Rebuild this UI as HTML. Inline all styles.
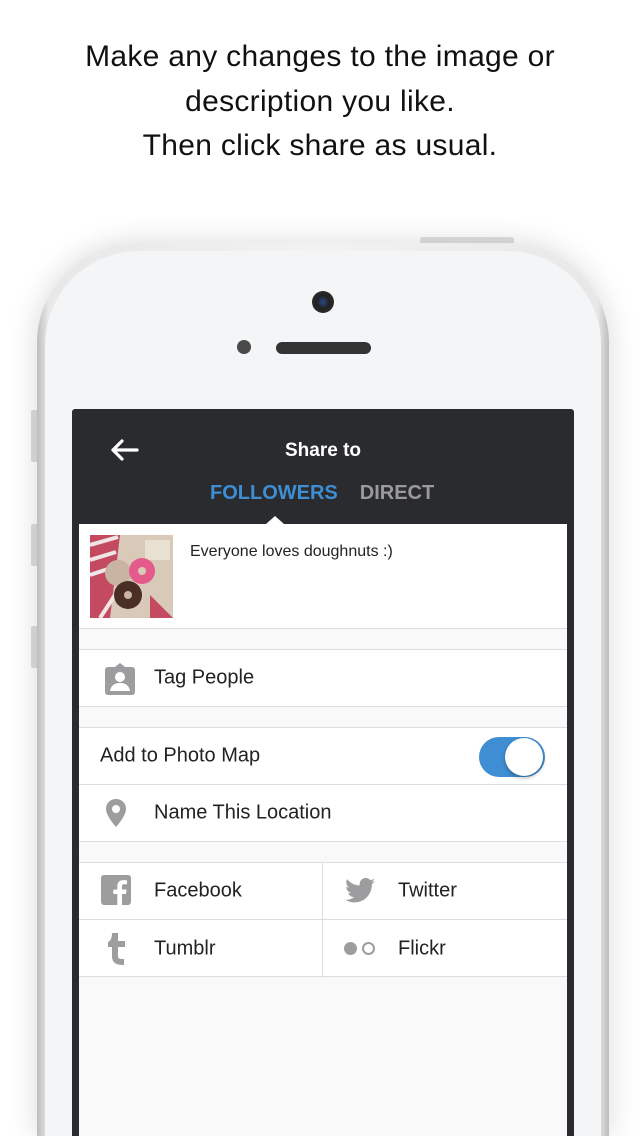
<!DOCTYPE html>
<html><head><meta charset="utf-8"><style>
*{margin:0;padding:0;box-sizing:border-box}
html,body{width:640px;height:1136px;overflow:hidden}
body{background:#fff;position:relative;font-family:"Liberation Sans",sans-serif}
.cap{position:absolute;top:35px;left:0;width:640px;text-align:center;font-size:30px;line-height:44.5px;color:#111;letter-spacing:0.3px}
.phone{position:absolute;left:37px;top:243px;width:572px;height:893px;border-radius:100px 100px 0 0;background:linear-gradient(90deg,#bdbdbd,#e8e8e8 2%,#f2f2f2 50%,#e8e8e8 98%,#bdbdbd);box-shadow:0 0 30px rgba(0,0,0,.15)}
.phone .inner{position:absolute;left:8px;top:8px;right:8px;bottom:0;border-radius:94px 94px 0 0;background:#f4f5f7}
.btn{position:absolute;left:420px;top:237px;width:94px;height:8px;background:#e0e0e0;border-radius:3px 3px 0 0}
.side{position:absolute;left:31px;width:7px;background:#ddd;border-radius:2px}
.cam{position:absolute;left:312px;top:291px;width:22px;height:22px;border-radius:50%;background:radial-gradient(circle at 50% 50%,#2a4a8a 0,#222 40%,#333 100%)}
.dot{position:absolute;left:237px;top:340px;width:14px;height:14px;border-radius:50%;background:#4a4a4a}
.spk{position:absolute;left:276px;top:342px;width:95px;height:12px;border-radius:6px;background:#333}
.screen{position:absolute;left:72px;top:409px;width:502px;height:727px;background:#2a2b2f;border-radius:3px 3px 0 0}
.hdr{position:absolute;left:79px;top:416px;width:488px;height:108px;background:#2a2b2f}
.title{position:absolute;left:0;width:488px;top:24px;text-align:center;color:#fff;font-size:19px;font-weight:bold}
.tabs{position:absolute;left:131px;top:66px;font-size:20px;font-weight:bold}
.content{position:absolute;left:79px;top:524px;width:488px;height:612px;background:#f9f9f9}
.row{position:absolute;left:0;width:488px;background:#fff;border-top:1px solid #ddd;border-bottom:1px solid #ddd;font-size:20px;color:#222}
.row span{position:absolute;top:50%;transform:translateY(-50%)}
.arrow{position:absolute;left:187px;top:-8px;width:0;height:0;border-left:9px solid transparent;border-right:9px solid transparent;border-bottom:8px solid #fff}
</style></head><body>
<div class="cap">Make any changes to the image or<br>description you like.<br>Then click share as usual.</div>
<div class="btn"></div>
<div class="side" style="top:410px;height:52px"></div>
<div class="side" style="top:524px;height:42px"></div>
<div class="side" style="top:626px;height:42px"></div>
<div class="phone"><div class="inner"></div></div>
<div class="cam"></div><div class="dot"></div><div class="spk"></div>
<div class="screen"></div>
<div class="hdr">
<svg style="position:absolute;left:30px;top:22px" width="30" height="24" viewBox="0 0 30 24"><path d="M28 12H4M13 3L4 12l9 9" stroke="#fff" stroke-width="3.2" fill="none" stroke-linecap="round" stroke-linejoin="round"/></svg>
<div class="title">Share to</div>
<div class="tabs"><span style="color:#3f8ed3">FOLLOWERS</span><span style="color:#9a9a9c;margin-left:22px">DIRECT</span></div>
</div>
<div class="content">
<div class="arrow"></div>
<div class="row" style="top:0;height:105px;border-top:none">
<svg style="position:absolute;left:11px;top:11px" width="83" height="83" viewBox="0 0 83 83"><rect width="83" height="83" fill="#d8c9b8"/><path d="M0 0h30L20 83H0z" fill="#c44a62"/><path d="M0 10l28-8M0 25l26-8M0 40l24-8M10 83L25 60" stroke="#f0e6e6" stroke-width="4"/><rect x="55" y="5" width="25" height="20" fill="#e8e0d0"/><circle cx="28" cy="38" r="13" fill="#c9b3a3"/><circle cx="52" cy="36" r="13" fill="#e45a8a"/><circle cx="52" cy="36" r="4" fill="#d8c9b8"/><circle cx="38" cy="60" r="14" fill="#4a2e26"/><circle cx="38" cy="60" r="4" fill="#c9b3a3"/><path d="M60 60l23 23H60z" fill="#c44a62"/></svg>
<span style="left:111px;top:28px;font-size:16px;color:#222">Everyone loves doughnuts :)</span></div>
<div class="row" style="top:125px;height:58px">
<svg style="position:absolute;left:26px;top:13px" width="30" height="32" viewBox="0 0 30 32"><rect x="0" y="4" width="30" height="28" rx="3" fill="#9d9d9f"/><path d="M10 4l5-4 5 4z" fill="#9d9d9f"/><circle cx="15" cy="14" r="5" fill="#fff"/><path d="M5 28c1-6 5-8 10-8s9 2 10 8z" fill="#fff"/></svg>
<span style="left:75px">Tag People</span></div>
<div class="row" style="top:203px;height:58px"><span style="left:21px">Add to Photo Map</span>
<div style="position:absolute;left:400px;top:9px;width:66px;height:40px;border-radius:20px;background:#3f8ed3"></div>
<div style="position:absolute;left:426px;top:10px;width:38px;height:38px;border-radius:50%;background:#fff;box-shadow:0 2px 4px rgba(0,0,0,.3)"></div></div>
<div class="row" style="top:260px;height:58px;border-top:1px solid #ddd">
<svg style="position:absolute;left:26px;top:14px" width="22" height="28" viewBox="0 0 22 28"><path d="M11 0C5 0 1 4.5 1 10c0 7 10 18 10 18s10-11 10-18C21 4.5 17 0 11 0z" fill="#9d9d9f"/><circle cx="11" cy="10" r="4" fill="#fff"/></svg>
<span style="left:75px">Name This Location</span></div>
<div class="row" style="top:338px;height:115px">
<div style="position:absolute;left:243px;top:0;width:1px;height:115px;background:#ddd"></div>
<div style="position:absolute;left:0;top:56px;width:488px;height:1px;background:#ddd"></div>
<svg style="position:absolute;left:22px;top:12px" width="30" height="30" viewBox="0 0 30 30"><rect width="30" height="30" rx="3" fill="#9d9d9f"/><path d="M21 30V19h4l.6-4.5H21v-3c0-1.3.4-2.2 2.2-2.2H26V5.3c-.5 0-2-.2-3.7-.2-3.7 0-6 2.2-6 6.2v3.3h-4V19h4v11z" fill="#fff"/></svg>
<span style="left:75px;top:28px">Facebook</span>
<svg style="position:absolute;left:266px;top:15px" width="30" height="25" viewBox="0 0 24 20"><path d="M24 2.4c-.9.4-1.8.6-2.8.8 1-.6 1.8-1.6 2.2-2.700-1 .6-2 1-3.1 1.2C19.3.6 18 0 16.6 0c-2.7 0-4.9 2.2-4.9 4.9 0 .4 0 .8.1 1.1C7.700 5.8 4.1 3.9 1.7.9c-.4.7-.7 1.6-.7 2.5 0 1.7.9 3.2 2.2 4.1-.8 0-1.6-.2-2.2-.6v.1c0 2.4 1.7 4.4 3.9 4.8-.4.1-.8.2-1.3.2-.3 0-.6 0-.9-.1.6 2 2.4 3.4 4.6 3.4-1.7 1.3-3.8 2.1-6.1 2.1-.4 0-.8 0-1.2-.1 2.2 1.4 4.8 2.2 7.5 2.2 9.1 0 14-7.5 14-14v-.6c1-.7 1.8-1.600 2.5-2.5z" fill="#9d9d9f"/></svg>
<span style="left:319px;top:28px">Twitter</span>
<svg style="position:absolute;left:27px;top:70px" width="20" height="32" viewBox="0 0 20 32"><path d="M6 0h6v8h7v6h-7v9c0 3 2 3 6 3v6c-8 0-12-2-12-9V14H2V9C5 8 6 4 6 0z" fill="#9d9d9f"/></svg>
<span style="left:75px;top:86px">Tumblr</span>
<div style="position:absolute;left:265px;top:79px;width:13px;height:13px;border-radius:50%;background:#9d9d9f"></div>
<div style="position:absolute;left:283px;top:79px;width:13px;height:13px;border-radius:50%;border:2.5px solid #9d9d9f"></div>
<span style="left:319px;top:86px">Flickr</span>
</div>
</div>
</body></html>
